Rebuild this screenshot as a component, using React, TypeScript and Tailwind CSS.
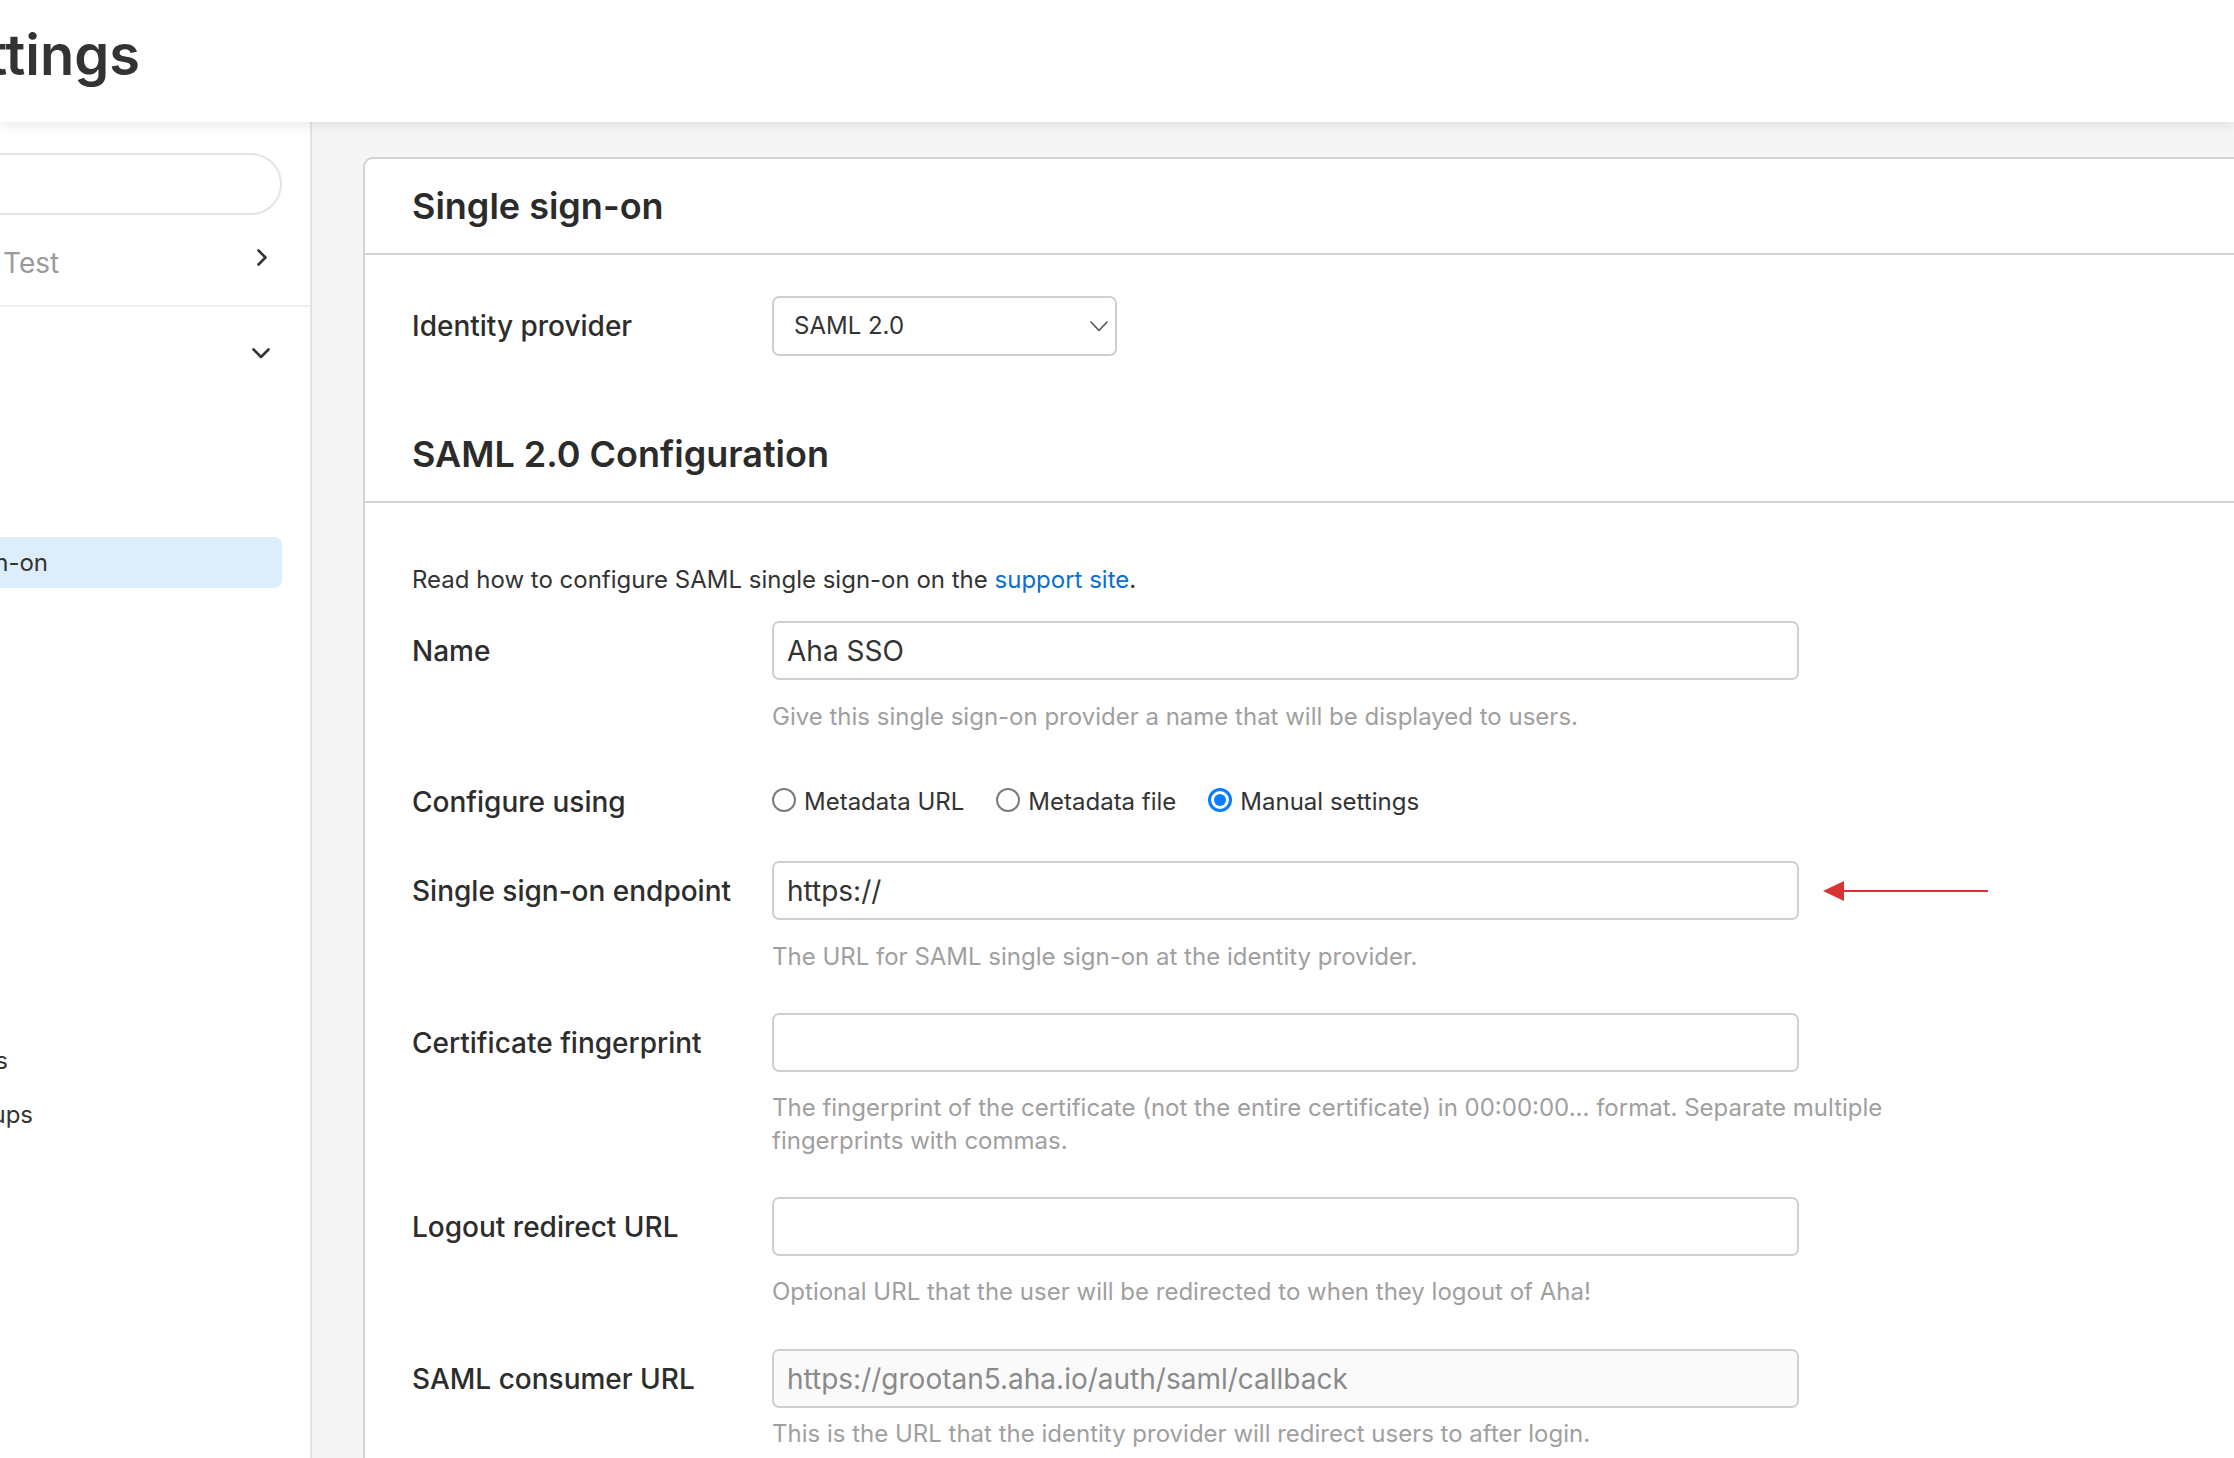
import React from "react"

const ChevronRight = () => (
  <svg className="-mt-[6px]" width="12" height="17" viewBox="0 0 12 17" fill="none">
    <path d="M2.5 1.5 L9.5 8.5 L2.5 15.5" stroke="#333" strokeWidth="2.6" strokeLinecap="round" strokeLinejoin="round" />
  </svg>
)

const ChevronDown = () => (
  <svg width="18" height="11" viewBox="0 0 18 11" fill="none">
    <path d="M1.5 1.5 L9 9 L16.5 1.5" stroke="#333" strokeWidth="2.6" strokeLinecap="round" strokeLinejoin="round" />
  </svg>
)

const SelectChevron = () => (
  <svg width="18" height="11" viewBox="0 0 18 11" fill="none">
    <path d="M1 1 L9 9.5 L17 1" stroke="#555" strokeWidth="1.6" strokeLinecap="round" strokeLinejoin="round" />
  </svg>
)

const Radio = ({ checked, label }: { checked?: boolean; label: string }) => (
  <label className="flex items-center gap-[8px]">
    {checked ? (
      <span className="w-[24px] h-[24px] rounded-full border-[3px] border-[#0a7cff] flex items-center justify-center -mt-[4px]">
        <span className="w-[12px] h-[12px] rounded-full bg-[#0a7cff]" />
      </span>
    ) : (
      <span className="w-[24px] h-[24px] rounded-full border-2 border-[#7b7b7b] bg-white -mt-[4px]" />
    )}
    <span className="text-[24px] leading-[33px] text-[#333]">{label}</span>
  </label>
)

const Hint = ({ children, className = "" }: { children: React.ReactNode; className?: string }) => (
  <p className={`ml-[360px] text-[24px] leading-[33px] text-[#a0a0a0] ${className}`}>{children}</p>
)

const Label = ({ children }: { children: React.ReactNode }) => (
  <span className="w-[360px] shrink-0 text-[28px] font-medium text-[#2d2d2d]">{children}</span>
)

const Field = ({ label, value, muted }: { label: string; value?: string; muted?: boolean }) => (
  <>
    <Label>{label}</Label>
    <div
      className={`w-[1027px] h-[59px] shrink-0 rounded-[7px] border-2 border-[#d0d0d0] flex items-center pl-[13px] text-[28px] ${
        muted ? "bg-[#fafafa] text-[#8a8a8a]" : "bg-white text-[#333]"
      }`}
    >
      {value}
    </div>
  </>
)

export default function App() {
  return (
    <div className="w-[2234px] h-[1458px] overflow-hidden flex flex-col bg-[#f5f5f5] font-['Inter',sans-serif] text-[#333]">
      {/* page header */}
      <header className="h-[122px] shrink-0 bg-white relative z-10 shadow-[0_3px_12px_rgba(0,0,0,0.09)]">
        <div className="w-[140px] flex justify-end pt-[27px] whitespace-nowrap text-[56px] leading-none font-semibold text-[#333]">
          Settings
        </div>
      </header>

      <div className="flex flex-1 min-h-0">
        {/* sidebar */}
        <aside className="w-[312px] shrink-0 bg-white border-r-2 border-[#e2e2e2] overflow-hidden flex flex-col">
          <div className="mt-[31px] -ml-[40px] w-[322px] h-[62px] shrink-0 rounded-full border-2 border-[#e4e4e4]" />

          <div className="h-[92px] shrink-0 flex items-center justify-between pl-[3px] pr-[42px] border-b-2 border-[#efefef]">
            <span className="text-[28px] text-[#9a9a9a] pt-[6px]">Test</span>
            <ChevronRight />
          </div>

          <div className="h-[92px] shrink-0 flex items-center justify-end pr-[40px]">
            <ChevronDown />
          </div>

          <div className="mt-[138px] w-[282px] h-[51px] shrink-0 rounded-r-[8px] bg-[#dcedfc] flex items-center">
            <div className="w-[48px] flex justify-end whitespace-nowrap text-[24px] text-[#333]">Single sign-on</div>
          </div>

          <div className="mt-[456px] w-[8px] flex justify-end whitespace-nowrap text-[24px] leading-[33px] text-[#333]">Users</div>
          <div className="mt-[21px] w-[33px] flex justify-end whitespace-nowrap text-[24px] leading-[33px] text-[#333]">Groups</div>
        </aside>

        {/* main */}
        <main className="flex-1 min-w-0 overflow-hidden pl-[51px] pt-[35px]">
          <div className="w-[1950px] bg-white border-2 border-[#d3d3d3] rounded-tl-[10px]">
            <div className="h-[96px] border-b-2 border-[#d3d3d3] flex items-center pl-[47px]">
              <h2 className="text-[36px] font-semibold text-[#2b2b2b]">Single sign-on</h2>
            </div>

            <div className="pl-[47px] pt-[41px] pb-[50px]">
              <div className="flex items-center">
                <Label>Identity provider</Label>
                <div className="w-[345px] h-[60px] rounded-[7px] border-2 border-[#d0d0d0] flex items-center justify-between pl-[20px] pr-[7px] text-[24px] text-[#333]">
                  SAML 2.0
                  <SelectChevron />
                </div>
              </div>
            </div>

            <div className="h-[97px] border-b-2 border-[#d3d3d3] flex items-center pl-[47px]">
              <h2 className="text-[36px] font-semibold text-[#2b2b2b]">SAML 2.0 Configuration</h2>
            </div>

            <div className="pl-[47px] pt-[60px] pb-[40px]">
              <p className="text-[24px] leading-[33px] text-[#333]">
                Read how to configure SAML single sign-on on the{" "}
                <a className="text-[#0a6fd1]">support site</a>.
              </p>

              <div className="mt-[25px] flex items-center">
                <Field label="Name" value="Aha SSO" />
              </div>
              <Hint className="mt-[20px]">Give this single sign-on provider a name that will be displayed to users.</Hint>

              <div className="mt-[52px] flex items-center h-[33px]">
                <Label>Configure using</Label>
                <div className="flex items-center gap-[32px]">
                  <Radio label="Metadata URL" />
                  <Radio label="Metadata file" />
                  <Radio checked label="Manual settings" />
                </div>
              </div>

              <div className="mt-[43px] flex items-center">
                <Field label="Single sign-on endpoint" value="https://" />
                <svg className="ml-[24px]" width="166" height="22" viewBox="0 0 166 22" fill="none">
                  <polygon points="0,11 21,1 21,21" fill="#d93434" />
                  <line x1="20" y1="11" x2="165" y2="11" stroke="#d93434" strokeWidth="2" />
                </svg>
              </div>
              <Hint className="mt-[20px]">The URL for SAML single sign-on at the identity provider.</Hint>

              <div className="mt-[40px] flex items-center">
                <Field label="Certificate fingerprint" />
              </div>
              <Hint className="mt-[19px] w-[1140px]">
                The fingerprint of the certificate (not the entire certificate) in 00:00:00... format. Separate multiple
                fingerprints with commas.
              </Hint>

              <div className="mt-[40px] flex items-center">
                <Field label="Logout redirect URL" />
              </div>
              <Hint className="mt-[19px]">Optional URL that the user will be redirected to when they logout of Aha!</Hint>

              <div className="mt-[41px] flex items-center">
                <Field label="SAML consumer URL" value="https://grootan5.aha.io/auth/saml/callback" muted />
              </div>
              <Hint className="mt-[9px]">This is the URL that the identity provider will redirect users to after login.</Hint>
            </div>
          </div>
        </main>
      </div>
    </div>
  )
}
